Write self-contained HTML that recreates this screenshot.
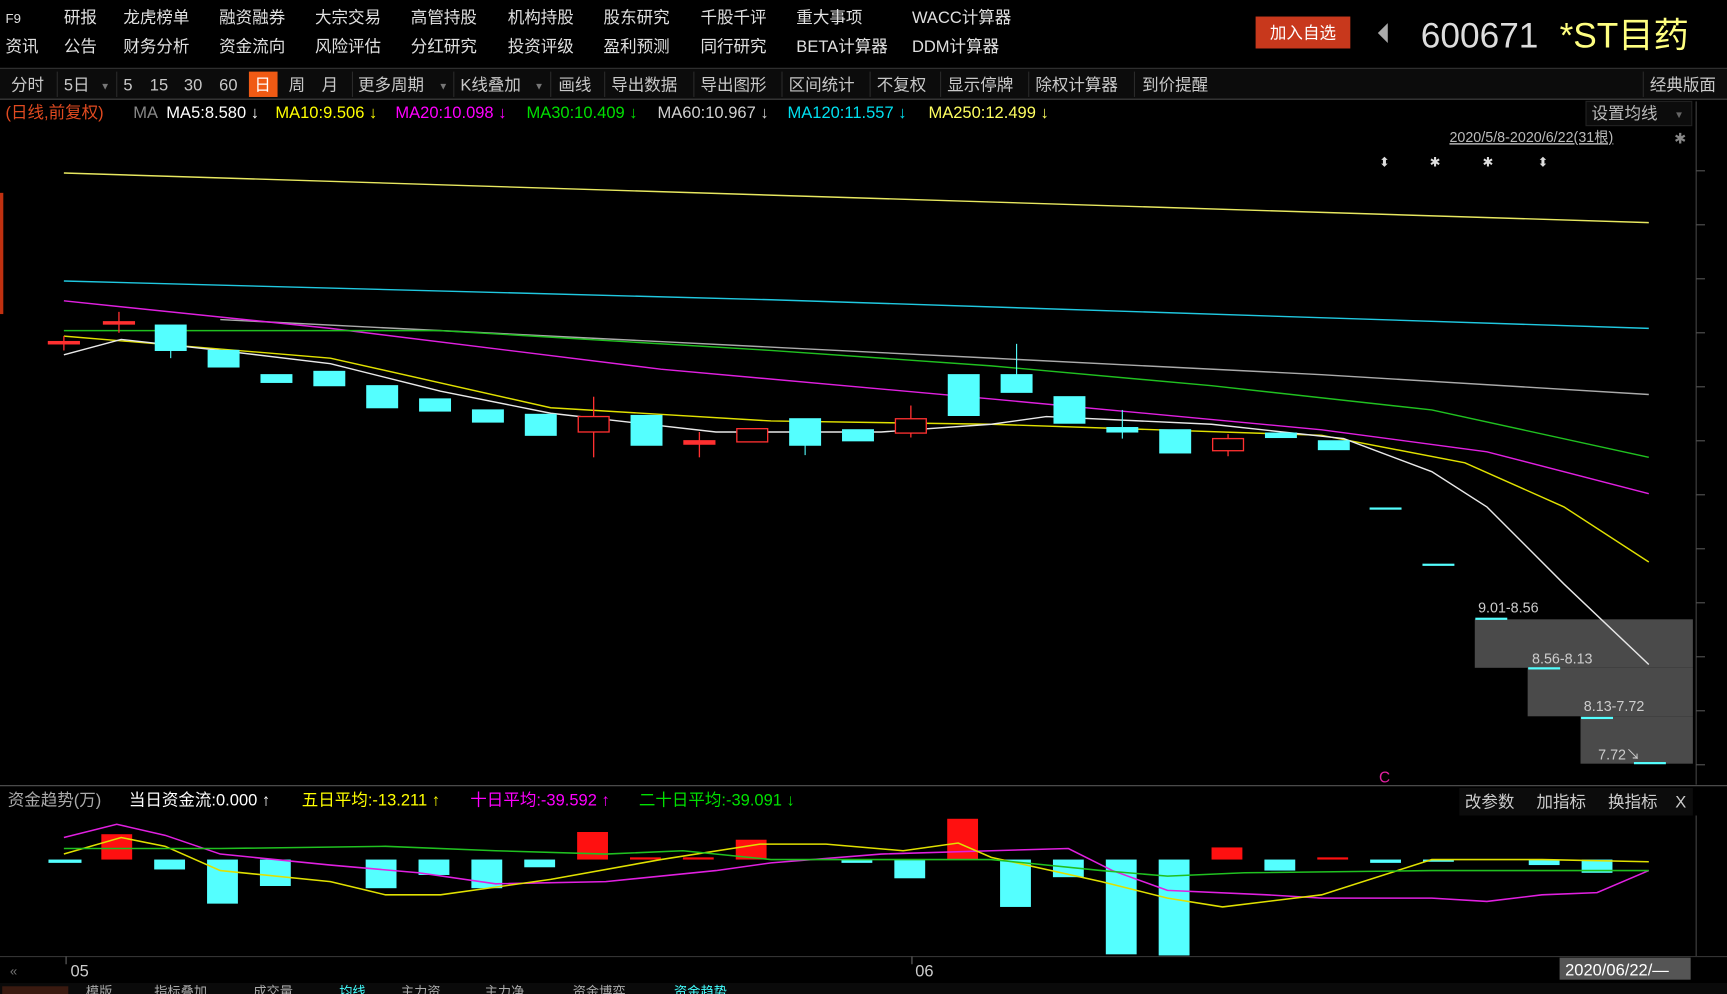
<!DOCTYPE html>
<html><head><meta charset="utf-8"><style>
html,body{margin:0;padding:0;background:#000;overflow:hidden}
svg{display:block}
text{font-family:"Liberation Sans","Noto Sans CJK SC",sans-serif}
</style></head><body>
<svg width="1727" height="994" viewBox="0 0 1568 902" preserveAspectRatio="none" xmlns="http://www.w3.org/2000/svg">
<rect width="1568" height="902" fill="#000"/>
<!-- top menu -->
<g fill="#e0e0e0" font-size="15">
<text x="5" y="21" font-size="12">F9</text><text x="58" y="21">研报</text><text x="112" y="21">龙虎榜单</text><text x="199" y="21">融资融券</text><text x="286" y="21">大宗交易</text><text x="373" y="21">高管持股</text><text x="461" y="21">机构持股</text><text x="548" y="21">股东研究</text><text x="636" y="21">千股千评</text><text x="723" y="21">重大事项</text><text x="828" y="21">WACC计算器</text>
<text x="5" y="47">资讯</text><text x="58" y="47">公告</text><text x="112" y="47">财务分析</text><text x="199" y="47">资金流向</text><text x="286" y="47">风险评估</text><text x="373" y="47">分红研究</text><text x="461" y="47">投资评级</text><text x="548" y="47">盈利预测</text><text x="636" y="47">同行研究</text><text x="723" y="47">BETA计算器</text><text x="828" y="47">DDM计算器</text>
</g>
<rect x="1140" y="15" width="86" height="29" fill="#c8381c"/>
<text x="1183" y="35" fill="#fff" font-size="15" text-anchor="middle">加入自选</text>
<path d="M1260 21 L1251 30 L1260 39 Z" fill="#aaa"/>
<text x="1290" y="43" fill="#ddd" font-size="32">600671</text>
<text x="1416" y="43" fill="#ffff80" font-size="32">*ST目药</text>
<!-- toolbar -->
<rect x="0" y="62" width="1568" height="28" fill="#0c0c0c"/>
<line x1="0" y1="62" x2="1568" y2="62" stroke="#333"/>
<line x1="0" y1="90" x2="1568" y2="90" stroke="#444"/>
<rect x="226" y="65" width="26" height="23" fill="#f05a14"/>
<g fill="#c8c8c8" font-size="15">
<text x="10" y="82">分时</text><text x="58" y="82">5日</text><text x="91" y="81" font-size="9" fill="#777">▼</text><text x="112" y="82">5</text><text x="136" y="82">15</text><text x="167" y="82">30</text><text x="199" y="82">60</text><text x="231" y="82" fill="#fff">日</text><text x="262" y="82">周</text><text x="292" y="82">月</text><text x="325" y="82">更多周期</text><text x="398" y="81" font-size="9" fill="#777">▼</text><text x="418" y="82">K线叠加</text><text x="485" y="81" font-size="9" fill="#777">▼</text><text x="507" y="82">画线</text><text x="555" y="82">导出数据</text><text x="636" y="82">导出图形</text><text x="716" y="82">区间统计</text><text x="796" y="82">不复权</text><text x="860" y="82">显示停牌</text><text x="940" y="82">除权计算器</text><text x="1037" y="82">到价提醒</text><text x="1498" y="82">经典版面</text>
</g>
<g stroke="#2a2a2a"><line x1="52" y1="65" x2="52" y2="88"/><line x1="106" y1="65" x2="106" y2="88"/><line x1="320" y1="65" x2="320" y2="88"/><line x1="412" y1="65" x2="412" y2="88"/><line x1="500" y1="65" x2="500" y2="88"/><line x1="549" y1="65" x2="549" y2="88"/><line x1="630" y1="65" x2="630" y2="88"/><line x1="710" y1="65" x2="710" y2="88"/><line x1="790" y1="65" x2="790" y2="88"/><line x1="854" y1="65" x2="854" y2="88"/><line x1="934" y1="65" x2="934" y2="88"/><line x1="1030" y1="65" x2="1030" y2="88"/><line x1="1492" y1="65" x2="1492" y2="88"/></g>
<!-- MA legend -->
<g font-size="15">
<text x="5" y="107" fill="#e04a20">(日线,前复权)</text>
<text x="121" y="107" fill="#888">MA</text>
<text x="151" y="107" fill="#fff">MA5:8.580 ↓</text>
<text x="250" y="107" fill="#ffff00">MA10:9.506 ↓</text>
<text x="359" y="107" fill="#ff00ff">MA20:10.098 ↓</text>
<text x="478" y="107" fill="#00e000">MA30:10.409 ↓</text>
<text x="597" y="107" fill="#d0d0d0">MA60:10.967 ↓</text>
<text x="715" y="107" fill="#00e0f0">MA120:11.557 ↓</text>
<text x="843" y="107" fill="#ffff60">MA250:12.499 ↓</text>
</g>
<rect x="1440" y="92" width="96" height="22" fill="#0c0c0c" stroke="#222"/>
<text x="1445" y="108" fill="#bbb" font-size="15">设置均线</text><text x="1520" y="107" fill="#666" font-size="9">▼</text>
<text x="1316" y="129" fill="#bbb" font-size="13" text-decoration="underline">2020/5/8-2020/6/22(31根)</text>
<text x="1520" y="130" fill="#888" font-size="13">✱</text>
<!-- chart frame -->
<rect x="0" y="175" width="3" height="110" fill="#c03010"/>
<line x1="1540" y1="92" x2="1540" y2="712" stroke="#444"/>
<g stroke="#555"><line x1="1540" y1="155" x2="1548" y2="155"/><line x1="1540" y1="204" x2="1548" y2="204"/><line x1="1540" y1="253" x2="1548" y2="253"/><line x1="1540" y1="302" x2="1548" y2="302"/><line x1="1540" y1="351" x2="1548" y2="351"/><line x1="1540" y1="400" x2="1548" y2="400"/><line x1="1540" y1="449" x2="1548" y2="449"/><line x1="1540" y1="498" x2="1548" y2="498"/><line x1="1540" y1="547" x2="1548" y2="547"/><line x1="1540" y1="596" x2="1548" y2="596"/><line x1="1540" y1="645" x2="1548" y2="645"/><line x1="1540" y1="694" x2="1548" y2="694"/></g>
<g fill="#ddd" font-size="12"><text x="1252" y="151">⬍</text><text x="1298" y="151">✱</text><text x="1346" y="151">✱</text><text x="1396" y="151">⬍</text></g>
<!-- range boxes -->
<rect x="1339" y="562" width="198" height="44" fill="#4a4a4a"/>
<rect x="1387" y="606" width="150" height="44" fill="#4a4a4a"/>
<rect x="1435" y="650" width="102" height="43" fill="#4a4a4a"/>
<g fill="#ccc" font-size="13"><text x="1342" y="556">9.01-8.56</text><text x="1391" y="602">8.56-8.13</text><text x="1438" y="645">8.13-7.72</text><text x="1451" y="689">7.72↘</text></g>
<!-- MA lines -->
<g fill="none" stroke-width="1.3">
<polyline stroke="#e8e860" points="58,157 1497,202"/>
<polyline stroke="#20c8e0" points="58,255 700,272 1497,298"/>
<polyline stroke="#aaa" points="200,290 900,325 1200,340 1497,358"/>
<polyline stroke="#e020e0" points="58,273 300,298 600,335 900,362 1200,390 1350,410 1497,448"/>
<polyline stroke="#20c020" points="58,300 400,300 700,318 900,332 1100,350 1300,372 1497,415"/>
<polyline stroke="#e0e000" points="58,305 300,325 500,370 700,382 900,385 1200,395 1330,420 1420,460 1497,510"/>
<polyline stroke="#e8e8e8" points="58,322 110,308 200,318 300,330 400,355 500,375 650,392 800,392 900,385 950,378 1100,385 1220,398 1300,428 1350,460 1420,530 1497,603"/>
</g>
<!-- candles -->
<g stroke="#ff3030" fill="#000" stroke-width="1.2">
<line x1="58" y1="305" x2="58" y2="318"/><rect x="44" y="310" width="28" height="2" fill="#ff3030"/>
<line x1="108" y1="283" x2="108" y2="302"/><rect x="94" y="292" width="28" height="2" fill="#ff3030"/>
<line x1="539" y1="360" x2="539" y2="415"/><rect x="525" y="378" width="28" height="14"/>
<line x1="635" y1="392" x2="635" y2="415"/><rect x="621" y="400" width="28" height="3" fill="#ff3030"/>
<rect x="669" y="389" width="28" height="12"/>
<line x1="827" y1="368" x2="827" y2="397"/><rect x="813" y="380" width="28" height="13"/>
<line x1="1115" y1="394" x2="1115" y2="414"/><rect x="1101" y="398" width="28" height="11"/>
</g>
<g fill="#54ffff" stroke="#54ffff">
<rect x="141" y="295" width="28" height="23"/><line x1="155" y1="318" x2="155" y2="325"/>
<rect x="189" y="318" width="28" height="15"/>
<rect x="237" y="340" width="28" height="7"/>
<rect x="285" y="337" width="28" height="13"/>
<rect x="333" y="350" width="28" height="20"/>
<rect x="381" y="362" width="28" height="11"/>
<rect x="429" y="372" width="28" height="11"/>
<rect x="477" y="376" width="28" height="19"/>
<rect x="573" y="377" width="28" height="27"/>
<rect x="717" y="380" width="28" height="24"/><line x1="731" y1="404" x2="731" y2="413"/>
<rect x="765" y="390" width="28" height="10"/>
<rect x="861" y="340" width="28" height="37"/>
<rect x="909" y="340" width="28" height="16"/><line x1="923" y1="312" x2="923" y2="340"/>
<rect x="957" y="360" width="28" height="24"/>
<rect x="1005" y="388" width="28" height="4"/><line x1="1019" y1="372" x2="1019" y2="398"/>
<rect x="1053" y="390" width="28" height="21"/>
<rect x="1149" y="393" width="28" height="4"/>
<rect x="1197" y="400" width="28" height="8"/>
<rect x="1244" y="461" width="28" height="1"/><rect x="1292" y="512" width="28" height="1"/><rect x="1340" y="561" width="28" height="1"/><rect x="1388" y="606" width="28" height="1"/><rect x="1436" y="651" width="28" height="1"/><rect x="1484" y="692" width="28" height="1"/>
</g>
<text x="1252" y="710" fill="#e020a0" font-size="14">C</text>
<!-- divider -->
<line x1="0" y1="713" x2="1568" y2="713" stroke="#555"/>
<!-- lower panel header -->
<g font-size="15">
<text x="7" y="731" fill="#aaa">资金趋势(万)</text>
<text x="117" y="731" fill="#fff">当日资金流:0.000 ↑</text>
<text x="274" y="731" fill="#ffff00">五日平均:-13.211 ↑</text>
<text x="427" y="731" fill="#ff00ff">十日平均:-39.592 ↑</text>
<text x="580" y="731" fill="#00e000">二十日平均:-39.091 ↓</text>
</g>
<rect x="1325" y="715" width="212" height="25" fill="#0c0c0c"/>
<g fill="#ccc" font-size="15"><text x="1330" y="733">改参数</text><text x="1395" y="733">加指标</text><text x="1460" y="733">换指标</text><text x="1521" y="733">X</text></g>
<line x1="1540" y1="740" x2="1540" y2="868" stroke="#444"/>
<!-- lower bars -->
<g fill="#ff1010">
<rect x="92" y="757" width="28" height="23"/><rect x="524" y="755" width="28" height="25"/><rect x="572" y="778" width="28" height="2"/><rect x="620" y="778" width="28" height="2"/><rect x="668" y="762" width="28" height="18"/><rect x="860" y="743" width="28" height="37"/><rect x="1100" y="769" width="28" height="11"/><rect x="1196" y="778" width="28" height="2"/>
</g>
<g fill="#54ffff">
<rect x="44" y="780" width="30" height="3"/><rect x="140" y="780" width="28" height="9"/><rect x="188" y="780" width="28" height="40"/><rect x="236" y="780" width="28" height="24"/><rect x="332" y="780" width="28" height="26"/><rect x="380" y="780" width="28" height="14"/><rect x="428" y="780" width="28" height="26"/><rect x="476" y="780" width="28" height="7"/><rect x="764" y="780" width="28" height="3"/><rect x="812" y="780" width="28" height="17"/><rect x="908" y="780" width="28" height="43"/><rect x="956" y="780" width="28" height="16"/><rect x="1004" y="780" width="28" height="86"/><rect x="1052" y="780" width="28" height="87"/><rect x="1148" y="780" width="28" height="10"/><rect x="1244" y="780" width="28" height="3"/><rect x="1292" y="780" width="28" height="2"/><rect x="1388" y="780" width="28" height="5"/><rect x="1436" y="780" width="28" height="12"/>
</g>
<g fill="none" stroke-width="1.4">
<polyline stroke="#e020e0" points="58,760 106,748 150,758 200,775 300,785 380,792 450,802 550,800 650,790 700,783 800,775 900,772 970,770 1010,790 1060,808 1150,812 1200,815 1300,815 1350,818 1400,812 1450,810 1497,790"/>
<polyline stroke="#e0e000" points="58,775 110,760 150,768 200,790 300,800 350,812 400,812 500,798 600,780 690,766 750,766 820,772 870,765 900,778 1000,800 1060,815 1110,823 1200,812 1300,780 1400,780 1497,782"/>
<polyline stroke="#20c020" points="58,770 200,770 350,768 450,772 550,775 620,772 700,780 900,780 1000,790 1060,795 1130,792 1300,790 1497,790"/>
</g>
<!-- axis -->
<line x1="0" y1="868" x2="1568" y2="868" stroke="#333"/>
<text x="9" y="885" fill="#777" font-size="12">«</text>
<line x1="60" y1="868" x2="60" y2="875" stroke="#666"/><text x="64" y="886" fill="#ccc" font-size="15">05</text>
<line x1="828" y1="868" x2="828" y2="875" stroke="#666"/><text x="831" y="886" fill="#ccc" font-size="15">06</text>
<rect x="1416" y="869" width="119" height="20" fill="#555"/>
<text x="1421" y="885" fill="#fff" font-size="15">2020/06/22/—</text>
<!-- bottom tabs -->
<rect x="0" y="892" width="1568" height="10" fill="#0a0a0a"/>
<rect x="2" y="895" width="60" height="7" fill="#3a1a10"/>
<g fill="#aaa" font-size="12"><text x="78" y="904">模版</text><text x="140" y="904">指标叠加</text><text x="230" y="904">成交量</text><text x="308" y="904" fill="#4ff">均线</text><text x="364" y="904">主力资</text><text x="440" y="904">主力净</text><text x="520" y="904">资金博弈</text><text x="612" y="904" fill="#4ff">资金趋势</text></g>
</svg>
</body></html>
